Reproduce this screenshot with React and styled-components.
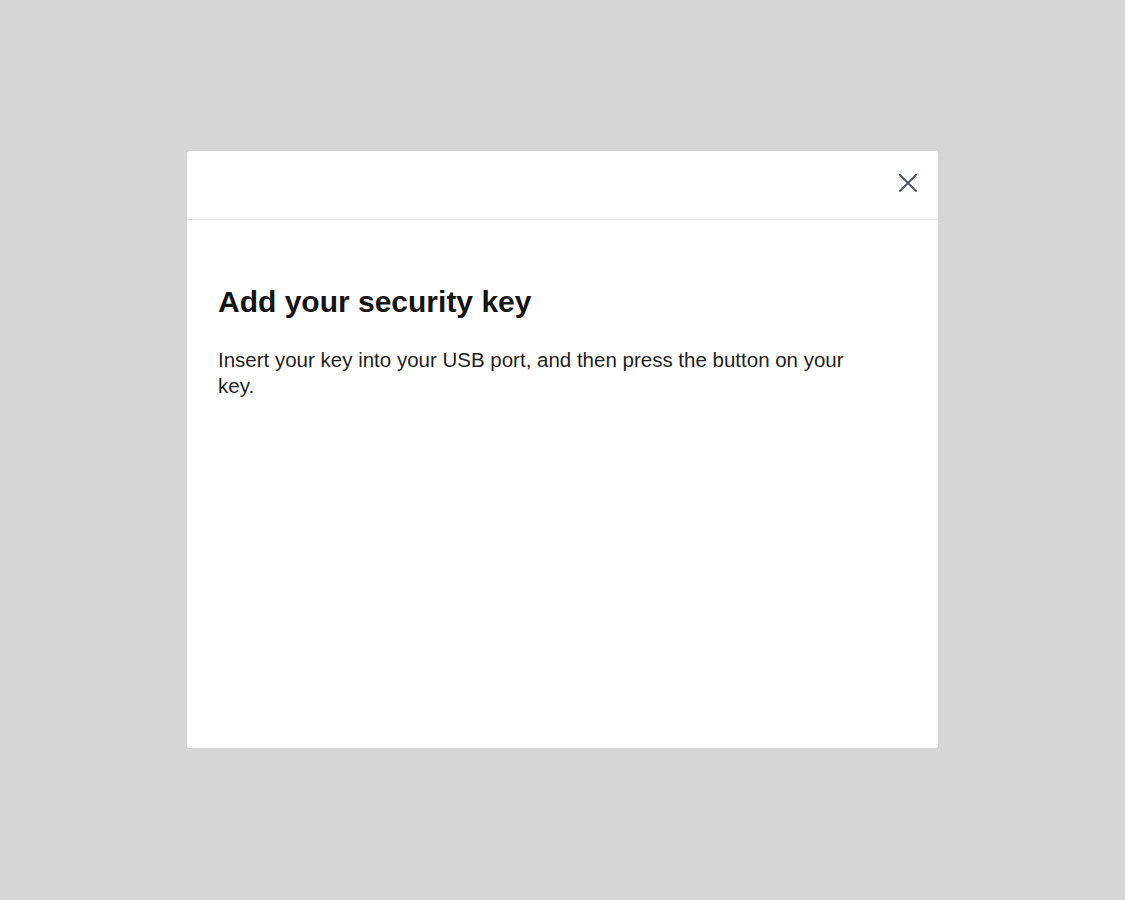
import React from 'react';
import styled, { createGlobalStyle } from 'styled-components';

const Global = createGlobalStyle`
  html, body {
    margin: 0;
    padding: 0;
    background: #d6d6d6;
    font-family: "Liberation Sans", Arial, sans-serif;
  }
`;

const Page = styled.div`
  height: 899px;
  display: flex;
  align-items: center;
  justify-content: center;
`;

const Modal = styled.div`
  width: 751px;
  height: 597px;
  background: #fff;
  border-radius: 3px;
  display: flex;
  flex-direction: column;
  overflow: hidden;
`;

const Header = styled.div`
  height: 69px;
  box-sizing: border-box;
  border-bottom: 1px solid #e3e7ea;
  display: flex;
  align-items: center;
  justify-content: flex-end;
  padding: 0 17px 5px;
`;

const CloseButton = styled.button`
  width: 26px;
  height: 26px;
  padding: 0;
  border: none;
  background: none;
  display: flex;
  align-items: center;
  justify-content: center;
  cursor: pointer;
  color: #4a5b6b;
`;

const Body = styled.div`
  padding: 64px 31px 0;
`;

const Title = styled.h1`
  margin: 0 0 27px;
  font-size: 30px;
  line-height: 36px;
  font-weight: 700;
  color: #141414;
`;

const Text = styled.p`
  margin: 0;
  max-width: 650px;
  font-size: 20.5px;
  line-height: 26px;
  color: #1e1e1e;
`;

export default function App() {
  return (
    <>
      <Global />
      <Page>
        <Modal role="dialog" aria-labelledby="title">
          <Header>
            <CloseButton aria-label="Close">
              <svg width="20" height="20" viewBox="0 0 20 20" fill="none" stroke="currentColor" strokeWidth="2" strokeLinecap="round">
                <path d="M2 2L18 18M18 2L2 18" />
              </svg>
            </CloseButton>
          </Header>
          <Body>
            <Title id="title">Add your security key</Title>
            <Text>Insert your key into your USB port, and then press the button on your key.</Text>
          </Body>
        </Modal>
      </Page>
    </>
  );
}
